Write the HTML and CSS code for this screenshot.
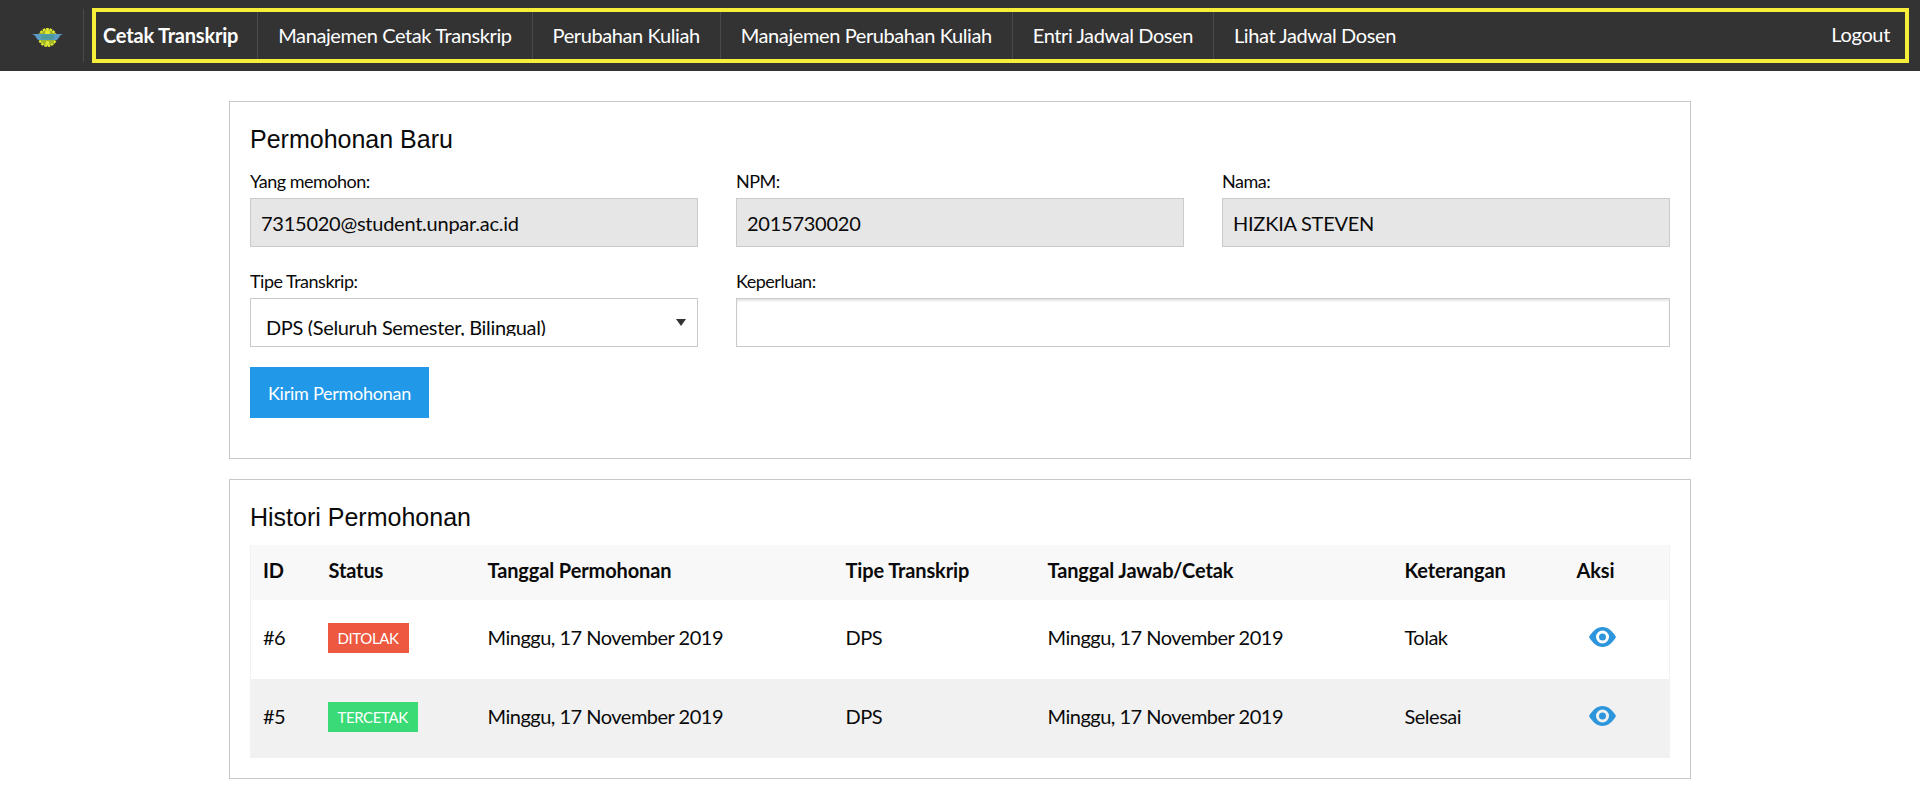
FILE: index.html
```html
<!DOCTYPE html>
<html lang="id">
<head>
  <meta charset="UTF-8" />
  <meta name="viewport" content="width=device-width, initial-scale=1" />
  <title>Cetak Transkrip</title>
  <link rel="stylesheet" href="styles.css">
</head>
<body>

  <nav class="topbar">
    <a class="brand" href="#">
      <svg class="brand-logo" viewBox="0 0 31 19" width="31" height="19">
        <circle cx="15.500" cy="9.500" r="8.500" fill="#9fb52c" stroke="#e8f030" stroke-width="2" stroke-dasharray="2.500 1" />
        <circle cx="15.500" cy="4.500" r="2.500" fill="#e0e830" />
        <circle cx="15.500" cy="15" r="2" fill="#e0e830" />
        <path d="M0 6h31l-3 1.500-1 2-2 2.500H6L4 9.500l-1-2z" fill="#5a9cc6" />
        <rect x="9" y="6.500" width="13" height="5" fill="#4c9a9a" />
      </svg>
    </a>
    <div class="menu">
      <a class="menu-item active" href="#">Cetak Transkrip</a>
      <a class="menu-item" href="#">Manajemen Cetak Transkrip</a>
      <a class="menu-item" href="#">Perubahan Kuliah</a>
      <a class="menu-item" href="#">Manajemen Perubahan Kuliah</a>
      <a class="menu-item" href="#">Entri Jadwal Dosen</a>
      <a class="menu-item" href="#">Lihat Jadwal Dosen</a>
      <a class="logout" href="#">Logout</a>
    </div>
  </nav>

  <main class="content">
    <section class="panel panel-form">
      <h2>Permohonan Baru</h2>
      <form class="form-grid">
        <div class="field">
          <label>Yang memohon:</label>
          <input type="text" value="7315020@student.unpar.ac.id" readonly />
        </div>
        <div class="field">
          <label>NPM:</label>
          <input type="text" value="2015730020" readonly />
        </div>
        <div class="field">
          <label>Nama:</label>
          <input type="text" value="HIZKIA STEVEN" readonly />
        </div>
        <div class="field">
          <label>Tipe Transkrip:</label>
          <div class="select-wrap">
            <select>
              <option>DPS (Seluruh Semester, Bilingual)</option>
            </select>
          </div>
        </div>
        <div class="field field-wide">
          <label>Keperluan:</label>
          <input class="editable" type="text" />
        </div>
      </form>
      <button class="btn" type="button">Kirim Permohonan</button>
    </section>

    <section class="panel panel-table">
      <h2>Histori Permohonan</h2>
      <table>
        <thead>
          <tr>
            <th class="c-id">ID</th>
            <th class="c-status">Status</th>
            <th class="c-date">Tanggal Permohonan</th>
            <th class="c-type">Tipe Transkrip</th>
            <th class="c-date2">Tanggal Jawab/Cetak</th>
            <th class="c-note">Keterangan</th>
            <th>Aksi</th>
          </tr>
        </thead>
        <tbody>
          <tr>
            <td>#6</td>
            <td><span class="label label-red">DITOLAK</span></td>
            <td>Minggu, 17 November 2019</td>
            <td>DPS</td>
            <td>Minggu, 17 November 2019</td>
            <td>Tolak</td>
            <td class="action">
              <svg class="eye" viewBox="0 0 27 20" width="27" height="20"><path fill-rule="evenodd" d="M0 10C3.500 4 8 0 13.500 0S23.500 4 27 10c-3.500 6-8 10-13.500 10S3.500 16 0 10zm13.500-6.500a6.500 6.500 0 1 0 0 13 6.500 6.500 0 0 0 0-13zm0 3a3.500 3.500 0 1 1 0 7 3.500 3.500 0 0 1 0-7z" /></svg>
            </td>
          </tr>
          <tr class="striped">
            <td>#5</td>
            <td><span class="label label-green">TERCETAK</span></td>
            <td>Minggu, 17 November 2019</td>
            <td>DPS</td>
            <td>Minggu, 17 November 2019</td>
            <td>Selesai</td>
            <td class="action">
              <svg class="eye" viewBox="0 0 27 20" width="27" height="20"><path fill-rule="evenodd" d="M0 10C3.500 4 8 0 13.500 0S23.500 4 27 10c-3.500 6-8 10-13.500 10S3.500 16 0 10zm13.500-6.500a6.500 6.500 0 1 0 0 13 6.500 6.500 0 0 0 0-13zm0 3a3.500 3.500 0 1 1 0 7 3.500 3.500 0 0 1 0-7z" /></svg>
            </td>
          </tr>
        </tbody>
      </table>
    </section>
  </main>

</body>
</html>
```

FILE: styles.css
```css
* { box-sizing: border-box; }
html, body { margin: 0; padding: 0; }
body { font-family: "Lato", "Noto Sans", sans-serif; background: #fff; color: #0a0a0a; overflow: hidden; }
a { color: inherit; text-decoration: none; }

.topbar { display: flex; align-items: stretch; height: 71px; padding: 8px 11px 8px 0; background: #333; }
.brand { display: flex; align-items: center; justify-content: center; width: 84px; margin-right: 8px; position: relative; }
.brand::after { content: ""; position: absolute; top: 1px; bottom: 1px; right: 0; width: 1px; background: #4a4a4a; }
.brand-logo { display: block; margin: 4px 0 0 10px; }
.menu { flex: 1; display: flex; align-items: stretch; border: 4px solid #f7ee3a; }
.menu-item { display: flex; align-items: center; padding: 0 20px 2px; font-size: 20px; letter-spacing: -0.4px; color: #fff; border-right: 1px solid #4a4a4a; }
.menu-item.active { padding: 0 19px 2px 7px; font-weight: 700; letter-spacing: -0.2px; }
.menu-item:nth-child(6) { border-right: 0; }
.logout { display: flex; align-items: center; margin-left: auto; padding: 0 15px 4px 0; font-size: 20px; letter-spacing: -0.35px; color: #fff; }

.content { display: flex; flex-direction: column; gap: 20px; width: 1462px; margin: 30px auto 0; }
.panel { border: 1px solid #c8c8c8; padding: 20px; }
.panel h2 { margin: 0; font-family: "Liberation Sans", Arial, sans-serif; font-size: 25px; font-weight: 400; line-height: 34px; color: #0a0a0a; }
.panel-form { height: 358px; }
.panel-table { height: 300px; }

.form-grid { display: grid; grid-template-columns: repeat(3, 448px); column-gap: 38px; row-gap: 22px; margin-top: 13px; }
.field { display: flex; flex-direction: column; }
.field-wide { grid-column: span 2; }
.field label { font-size: 18px; letter-spacing: -0.5px; line-height: 25px; margin-bottom: 4px; color: #0a0a0a; }
.field input { width: 100%; height: 49px; padding: 0 10px; font-family: inherit; font-size: 20px; letter-spacing: -0.25px; color: #0a0a0a; background: #e6e6e6; border: 1px solid #cacaca; border-radius: 0; outline: none; }
.field input.editable { background: #fff; box-shadow: inset 0 2px 2px rgba(10, 10, 10, 0.1); }

.select-wrap { position: relative; height: 49px; }
.select-wrap::after { content: ""; position: absolute; top: 21px; right: 12px; border: 5px solid transparent; border-top: 7px solid #333; border-bottom: 0; }
.select-wrap select { display: block; width: 100%; height: 49px; padding: 16px 30px 10px 15px; font-family: inherit; font-size: 20px; letter-spacing: -0.35px; color: #0a0a0a; background: #fff; border: 1px solid #cacaca; border-radius: 0; appearance: none; }

.btn { display: block; width: 179px; height: 51px; margin-top: 20px; padding: 0; font-family: inherit; font-size: 18px; letter-spacing: -0.25px; color: #fff; background: #2199e8; border: 0; cursor: pointer; }

table { width: 1420px; border-collapse: collapse; table-layout: fixed; margin-top: 11px; border: 1px solid #f1f1f1; border-top: 0; border-bottom: 0; }
th { height: 55px; padding: 0 12px 6px 13px; font-size: 20px; letter-spacing: -0.12px; font-weight: 700; text-align: left; background: #f8f8f8; }
td { height: 79px; padding: 0 12px 6px 13px; font-size: 20px; letter-spacing: -0.5px; }
th:first-child, td:first-child { padding-left: 12px; }
.c-id { width: 65px; }
.c-status { width: 159px; }
.c-date { width: 358px; }
.c-type { width: 202px; }
.c-date2 { width: 357px; }
.c-note { width: 172px; }
.striped td { background: #f1f1f1; }
.label { display: inline-block; margin: 2px 0 0 -1px; padding: 0 10px; font-size: 15px; letter-spacing: -0.4px; line-height: 30px; color: #fff; }
.label-red { background: #ec5840; }
.label-green { background: #3adb76; }
.eye { display: block; margin-left: 12px; fill: #2d95dc; }
```
